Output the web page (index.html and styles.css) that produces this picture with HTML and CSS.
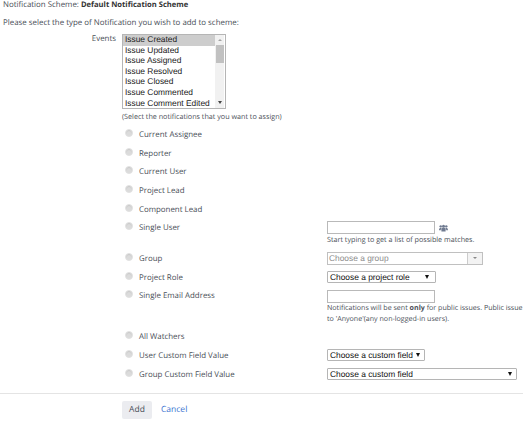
FILE: index.html
```html
<!DOCTYPE html>
<html lang="en">
<head>
<meta charset="utf-8">
<title>Add Notification</title>
<link rel="stylesheet" href="styles.css">
</head>
<body>
<p class="scheme">Notification Scheme: <b>Default Notification Scheme</b></p>
<p class="intro">Please select the type of Notification you wish to add to scheme:</p>
<div class="events">
  <span class="events-label">Events</span>
  <div class="events-col">
    <div class="listbox">
      <ul class="options">
        <li class="selected">Issue Created</li>
        <li>Issue Updated</li>
        <li>Issue Assigned</li>
        <li>Issue Resolved</li>
        <li>Issue Closed</li>
        <li>Issue Commented</li>
        <li>Issue Comment Edited</li>
      </ul>
      <div class="scrollbar">
        <span class="arrow-up"></span>
        <span class="thumb"></span>
        <span class="arrow-down"></span>
      </div>
    </div>
    <div class="hint events-hint">(Select the notifications that you want to assign)</div>
  </div>
</div>
<div class="types">
  <div class="row"><span class="radio"></span><span class="label">Current Assignee</span></div>
  <div class="row"><span class="radio"></span><span class="label">Reporter</span></div>
  <div class="row"><span class="radio"></span><span class="label">Current User</span></div>
  <div class="row"><span class="radio"></span><span class="label">Project Lead</span></div>
  <div class="row"><span class="radio"></span><span class="label">Component Lead</span></div>
  <div class="row row-user"><span class="radio"></span><span class="label">Single User</span>
    <div class="field">
      <div class="user-line"><span class="input input-user"></span>
        <svg class="people" viewBox="0 0 12 10" width="9" height="8"><circle cx="2.300" cy="2.800" r="1.600"/><circle cx="9.700" cy="2.800" r="1.600"/><circle cx="6" cy="2.600" r="2"/><path d="M0 8c0-2 .8-3.200 2.300-3.200h1v2.200h-1v1z"/><path d="M12 8c0-2-.8-3.200-2.300-3.200h-1v2.200h1v1z"/><path d="M3.200 9.500v-2.500c0-1.600 1-2.300 2.800-2.300s2.800.7 2.800 2.300v2.500z"/></svg>
      </div>
      <div class="hint">Start typing to get a list of possible matches.</div>
    </div>
  </div>
  <div class="row"><span class="radio"></span><span class="label">Group</span>
    <div class="field"><div class="combo"><span class="combo-text">Choose a group</span><span class="combo-btn"><span class="arrow-grey"></span></span></div></div>
  </div>
  <div class="row"><span class="radio"></span><span class="label">Project Role</span>
    <div class="field"><div class="select select-role"><span>Choose a project role</span><span class="arrow-black"></span></div></div>
  </div>
  <div class="row row-email"><span class="radio"></span><span class="label">Single Email Address</span>
    <div class="field">
      <span class="input input-email"></span>
      <div class="hint notice">Notifications will be sent <b>only</b> for public issues. Public issue<br>to 'Anyone'(any non-logged-in users).</div>
    </div>
  </div>
  <div class="row"><span class="radio"></span><span class="label">All Watchers</span></div>
  <div class="row"><span class="radio"></span><span class="label">User Custom Field Value</span>
    <div class="field"><div class="select select-user"><span>Choose a custom field</span><span class="arrow-black"></span></div></div>
  </div>
  <div class="row"><span class="radio"></span><span class="label">Group Custom Field Value</span>
    <div class="field"><div class="select select-group"><span>Choose a custom field</span><span class="arrow-black"></span></div></div>
  </div>
</div>
<div class="actions">
  <span class="btn">Add</span>
  <a class="cancel" href="#">Cancel</a>
</div>
</body>
</html>
```
FILE: styles.css
```css
html, body { margin: 0; padding: 0; }
body {
  width: 523px;
  height: 423px;
  overflow: hidden;
  font-family: "Open Sans", "Liberation Sans", sans-serif;
  font-size: 7.900px;
  line-height: 12px;
  color: #4a4f58;
  background: #fff;
  text-rendering: geometricPrecision;
}
.scheme { margin: 0; padding: 0 0 0 3px; height: 10px; line-height: 10px; }
.scheme b { color: #333; font-size: 7.600px; }
.intro { margin: 7px 0 0 3px; height: 12px; }
.events { display: flex; margin-top: 5px; }
.events-label { width: 116px; text-align: right; line-height: 11px; }
.events-col { margin-left: 6px; }
.listbox {
  display: flex;
  width: 104px;
  height: 75px;
  box-sizing: border-box;
  border: 1px solid #b5b5b5;
  font-family: "Liberation Sans", sans-serif;
  font-size: 8.400px;
  color: #222;
}
.options { list-style: none; margin: 0; padding: 0; flex: 1; }
.options li { height: 10.600px; line-height: 9.600px; padding-left: 2px; white-space: nowrap; }
.options .selected { background: #cdcdcd; }
.scrollbar { width: 9px; margin-right: 1px; background: #f1f1f1; display: flex; flex-direction: column; align-items: center; }
.arrow-up { margin-top: 4px; border: 2px solid transparent; border-top: 0; border-bottom: 2px solid #a3a3a3; }
.thumb { width: 8px; height: 18px; margin-top: 4px; background: #c1c1c1; }
.arrow-down { margin-top: auto; margin-bottom: 4px; border: 2.500px solid transparent; border-bottom: 0; border-top: 3px solid #444; }
.hint { font-size: 7.200px; line-height: 12px; color: #4a4f58; white-space: nowrap; }
.events-hint { margin-top: 2px; }
.types { margin-top: 5px; }
.row { display: flex; align-items: flex-start; height: 18.700px; padding-left: 125px; }
.row-user { height: 30.500px; }
.row-email { height: 41px; }
.radio {
  width: 8px; height: 8px; margin-top: 1px;
  border-radius: 50%;
  background: #dbdbdb;
  border: 1px solid #e2e2e2;
  box-shadow: inset 0 1px 1px #c6c6c6;
  box-sizing: border-box;
  flex: none;
}
.label { margin-left: 6px; width: 188px; flex: none; line-height: 14px; white-space: nowrap; }
.field { width: 196px; flex: none; }
.input { display: block; box-sizing: border-box; height: 13px; border: 1px solid #b9b9b9; background: #fff; }
.input-user { width: 108px; }
.input-email { width: 108px; margin-top: 1px; }
.user-line { display: flex; align-items: center; gap: 4px; }
.people { fill: #6f7a90; }
.notice { line-height: 11px; font-size: 7.100px; }
.combo { display: flex; width: 156px; height: 13px; box-sizing: border-box; border: 1px solid #c0c0c0; font-family: "Liberation Sans", sans-serif; font-size: 8.400px; color: #8d8d8d; }
.combo-text { flex: 1; padding-left: 1px; line-height: 11px; }
.combo-btn { width: 14px; border-left: 1px solid #ccc; background: #f3f3f3; display: flex; align-items: center; justify-content: center; }
.arrow-grey { border: 2px solid transparent; border-bottom: 0; border-top: 2px solid #888; }
.select {
  display: flex; align-items: center; justify-content: space-between;
  box-sizing: border-box; height: 12px;
  border: 1px solid #b5b5b5; border-radius: 1px;
  padding: 0 4px 0 2px;
  font-family: "Liberation Sans", sans-serif; font-size: 8.400px; color: #111;
  background: #fff;
  white-space: nowrap;
}
.select-role { width: 109px; padding-right: 6px; }
.select-user { width: 98px; }
.select-group { width: 190px; }
.arrow-black { border: 2px solid transparent; border-bottom: 0; border-top: 4px solid #111; }
.actions {
  position: absolute; left: 0; top: 393px; width: 523px; box-sizing: border-box;
  border-top: 1px solid #e4e4e4;
  display: flex; align-items: center;
  padding: 7px 0 0 122px;
  gap: 9px;
  font-size: 8.500px;
}
.btn { display: flex; align-items: center; justify-content: center; width: 30px; height: 18px; background: #ebecf0; border-radius: 2px; color: #4a4f58; }
.cancel { color: #3b73d0; text-decoration: none; }
```
